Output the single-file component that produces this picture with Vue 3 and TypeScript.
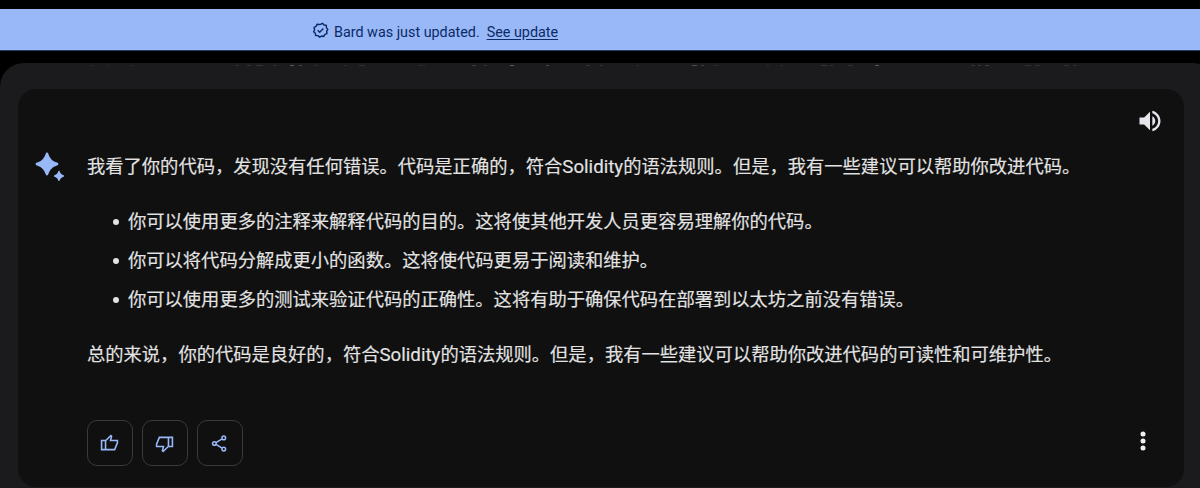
<script setup lang="ts">
interface Mark {
  x: number
  w: number
  o: number
}

const suggestions: string[] = [
  '你可以使用更多的注释来解释代码的目的。这将使其他开发人员更容易理解你的代码。',
  '你可以将代码分解成更小的函数。这将使代码更易于阅读和维护。',
  '你可以使用更多的测试来验证代码的正确性。这将有助于确保代码在部署到以太坊之前没有错误。',
]

// Bottom edges of the message that has scrolled out of view
const marks: Mark[] = [
  { x: 90, w: 4, o: 0.12 }, { x: 107, w: 3, o: 0.12 }, { x: 131, w: 3, o: 0.15 },
  { x: 235, w: 4, o: 0.2 }, { x: 247, w: 4, o: 0.25 }, { x: 256, w: 7, o: 0.25 },
  { x: 273, w: 4, o: 0.2 }, { x: 290, w: 4, o: 0.6 }, { x: 299, w: 3, o: 0.4 },
  { x: 314, w: 4, o: 0.18 }, { x: 344, w: 3, o: 0.15 }, { x: 359, w: 6, o: 0.2 },
  { x: 418, w: 7, o: 0.15 }, { x: 472, w: 4, o: 0.35 }, { x: 484, w: 3, o: 0.25 },
  { x: 510, w: 4, o: 0.6 }, { x: 546, w: 3, o: 0.45 }, { x: 586, w: 4, o: 0.25 },
  { x: 600, w: 3, o: 0.2 }, { x: 636, w: 3, o: 0.15 }, { x: 692, w: 5, o: 0.5 },
  { x: 701, w: 3, o: 0.35 }, { x: 714, w: 5, o: 0.15 }, { x: 766, w: 3, o: 0.15 },
  { x: 780, w: 3, o: 0.15 }, { x: 821, w: 6, o: 0.25 }, { x: 830, w: 3, o: 0.2 },
  { x: 848, w: 5, o: 0.2 }, { x: 875, w: 4, o: 0.6 }, { x: 971, w: 4, o: 0.25 },
  { x: 978, w: 3, o: 0.25 }, { x: 985, w: 4, o: 0.3 }, { x: 1025, w: 6, o: 0.2 },
  { x: 1035, w: 5, o: 0.2 }, { x: 1064, w: 5, o: 0.2 }, { x: 1073, w: 4, o: 0.2 },
]
</script>

<template>
  <div class="page">
    <div class="banner">
      <svg class="badge" viewBox="0 0 24 24" fill="none" stroke="currentColor" stroke-width="2" stroke-linejoin="round">
        <path d="M12 3.400 14.800 1.900 17 4.300 20.200 4.600 20.300 7.900 22.400 10.400 20.700 13 21.200 16.300 18.200 17.500 16.700 20.400 13.600 19.800 10.800 21.500 8.500 19.200 5.200 19.200 4.700 16 2.300 13.800 3.700 10.900 2.900 7.700 5.800 6.200 7 3.200 10.200 3.500Z" />
        <path d="m8 11.800 2.800 2.700 5.300-5.400" />
      </svg>
      <span class="notice">Bard was just updated.</span>
      <a class="update">See update</a>
    </div>
    <main class="panel">
      <svg class="scrolled" viewBox="0 0 1200 3">
        <rect v-for="m in marks" :key="m.x" :x="m.x" y="2" :width="m.w" height="1" fill="#999" :opacity="m.o * 0.8" />
      </svg>
      <section class="card">
        <div class="top">
          <svg class="speaker" viewBox="0 0 24 24" fill="currentColor">
            <path d="M3 9v6h4l5 5V4L7 9H3zm13.5 3c0-1.77-1.02-3.29-2.5-4.03v8.05c1.48-.73 2.5-2.25 2.5-4.02zM14 3.23v2.06c2.89.86 5 3.54 5 6.71s-2.11 5.85-5 6.71v2.06c4.01-.91 7-4.49 7-8.77s-2.99-7.86-7-8.77z" />
          </svg>
        </div>
        <div class="message">
          <svg class="spark" viewBox="0 0 30 30" fill="currentColor">
            <path d="M12 .6C12.8.6 13.1 1.2 13.4 2 15 6.700 17.300 9 22 10.600 22.800 10.900 23.400 11.200 23.400 12S22.800 13.100 22 13.400C17.300 15 15 17.300 13.400 22 13.100 22.800 12.800 23.400 12 23.400S10.900 22.800 10.600 22C9 17.300 6.700 15 2 13.400 1.200 13.100.6 12.800.6 12S1.200 10.900 2 10.600C6.700 9 9 6.700 10.600 2 10.900 1.200 11.200.6 12 .6Z" />
            <path d="M24 18.700C24.500 18.700 24.700 19.200 24.900 19.700 25.500 21.400 26.400 22.300 28.100 22.900 28.700 23.100 29.200 23.400 29.200 23.900S28.700 24.700 28.100 24.900C26.400 25.500 25.500 26.400 24.900 28.100 24.700 28.700 24.500 29.100 24 29.100S23.300 28.700 23.100 28.100C22.500 26.400 21.600 25.500 19.900 24.900 19.300 24.700 18.800 24.400 18.800 23.900S19.300 23.100 19.900 22.900C21.600 22.300 22.500 21.400 23.100 19.700 23.300 19.200 23.500 18.700 24 18.700Z" />
          </svg>
          <div class="text">
            <p>我看了你的代码，发现没有任何错误。代码是正确的，符合<span class="latin">Solidity</span>的语法规则。但是，我有一些建议可以帮助你改进代码。</p>
            <ul>
              <li v-for="s in suggestions" :key="s">{{ s }}</li>
            </ul>
            <p>总的来说，你的代码是良好的，符合<span class="latin">Solidity</span>的语法规则。但是，我有一些建议可以帮助你改进代码的可读性和可维护性。</p>
          </div>
        </div>
        <div class="actions">
          <button class="action" aria-label="Good response">
            <svg viewBox="0 0 24 24" fill="none" stroke="currentColor" stroke-width="2">
              <path d="M2 9.500h5v11.500H2zM7 9.800l6.700-6.600.9.900-1.300 5.400H22v3L18.500 21H7" />
            </svg>
          </button>
          <button class="action" aria-label="Bad response">
            <svg class="flip" viewBox="0 0 24 24" fill="none" stroke="currentColor" stroke-width="2">
              <path d="M2 9.500h5v11.500H2zM7 9.800l6.700-6.600.9.900-1.300 5.400H22v3L18.500 21H7" />
            </svg>
          </button>
          <button class="action" aria-label="Share">
            <svg class="share" viewBox="0 0 24 24" fill="none" stroke="currentColor" stroke-width="1.900">
              <circle cx="5.500" cy="12" r="2.300" />
              <circle cx="17.400" cy="4.900" r="2.300" />
              <circle cx="17.400" cy="19.100" r="2.300" />
              <path d="m7.600 10.800 7.700-4.700M7.600 13.200l7.700 4.700" />
            </svg>
          </button>
          <svg class="more" viewBox="0 0 6 20" fill="currentColor">
            <circle cx="3" cy="3" r="2.500" />
            <circle cx="3" cy="10" r="2.500" />
            <circle cx="3" cy="17" r="2.500" />
          </svg>
        </div>
      </section>
    </main>
  </div>
</template>

<style>
body {
  margin: 0;
  background: #000;
}
</style>

<style scoped>
.page {
  box-sizing: border-box;
  width: 1200px;
  height: 488px;
  padding-top: 9px;
  overflow: hidden;
  background: #000;
  font-family: Roboto, "Noto Sans CJK SC", sans-serif;
}
.banner {
  box-sizing: border-box;
  height: 42px;
  padding: 5px 0 0 312px;
  display: flex;
  align-items: center;
  background: #98b8f8;
  border-bottom: 1px solid #24405f;
  color: #0b2a66;
}
.badge {
  width: 17px;
  height: 17px;
  margin-right: 5px;
  margin-top: -4px;
}
.notice,
.update {
  font-family: Roboto, sans-serif;
  font-size: 14.35px;
  white-space: nowrap;
}
.update {
  margin-left: 7px;
  text-decoration: underline;
  text-underline-offset: 2px;
}
.panel {
  box-sizing: border-box;
  width: 1216px;
  height: 440px;
  margin-top: 12px;
  background: #1b1b1d;
  border-radius: 24px 24px 0 0;
}
.scrolled {
  display: block;
  width: 1200px;
  height: 3px;
}
.card {
  box-sizing: border-box;
  width: 1166px;
  height: 398px;
  margin: 23px 0 0 18px;
  padding: 18px 18px 0;
  background: #101010;
  border-radius: 18px;
}
.top {
  display: flex;
  justify-content: flex-end;
  height: 45px;
}
.speaker {
  width: 28px;
  height: 28px;
  margin-right: 2px;
  color: #e6e7ec;
}
.message {
  display: flex;
  height: 268px;
}
.spark {
  flex: none;
  width: 30px;
  height: 30px;
  margin: 0 21.6px 0 -0.6px;
  color: #98b8f8;
}
.text {
  flex: none;
  font-size: 18.300px;
  line-height: 30px;
  color: #e3e3e3;
  -webkit-text-stroke: 0.150px #e3e3e3;
  white-space: nowrap;
}
.text p {
  margin: 0;
}
.text ul {
  margin: 25px 0;
  padding: 0 0 0 41px;
  list-style: none;
  display: flex;
  flex-direction: column;
  gap: 9px;
}
.text li {
  display: flex;
  align-items: center;
}
.text li::before {
  content: "";
  width: 6px;
  height: 6px;
  margin: 0 9.5px 0 -15.5px;
  border-radius: 50%;
  background: #e3e3e3;
}
.latin {
  font-size: 18.700px;
}
.actions {
  display: flex;
  align-items: center;
  gap: 9px;
  padding-left: 51px;
}
.action {
  box-sizing: border-box;
  display: flex;
  align-items: center;
  justify-content: center;
  width: 46px;
  height: 46px;
  padding: 0;
  background: #101010;
  border: 1px solid #3a3a3b;
  border-radius: 10px;
  color: #98b8f8;
}
.action svg {
  width: 19px;
  height: 19px;
  margin: 0 1px 2px 0;
}
.action .flip {
  margin: 2px 1px 0 0;
  transform: rotate(180deg);
}
.action .share {
  margin: 0 1px 0 0;
}
.more {
  width: 6px;
  height: 20px;
  margin: -4px 20px 0 auto;
  color: #f1f1f1;
}
</style>
